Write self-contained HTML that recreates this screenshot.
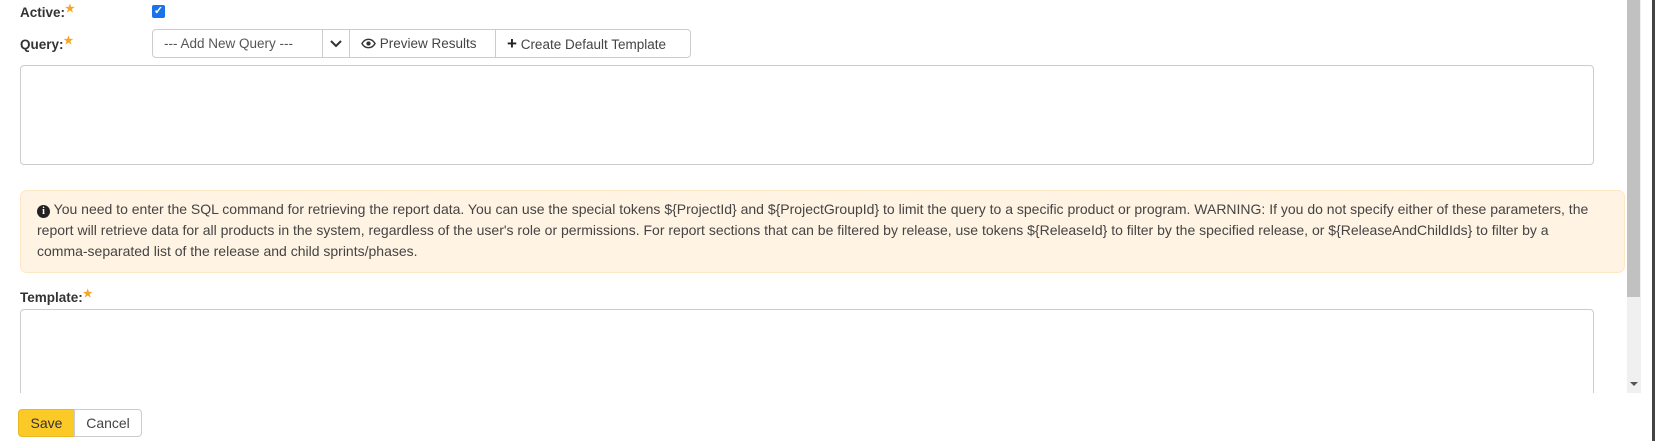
<!DOCTYPE html>
<html><head><style>
*{box-sizing:border-box}
body{margin:0;width:1655px;height:441px;background:#fff;font-family:"Liberation Sans",sans-serif;font-size:14px;color:#333;position:relative;overflow:hidden}
.abs{position:absolute}
.lbl{font-weight:bold;font-size:13.5px;color:#333}
.star{color:#f5a623;font-size:11px;vertical-align:top;position:relative;top:-3px}
.ta{border:1px solid #ccc;border-radius:4px;background:#fff}
.btn{position:absolute;top:29px;height:29px;border:1px solid #ccc;background:#fff;font-size:13.5px;color:#444;line-height:27px;padding:0 11px;white-space:nowrap}
</style></head><body>
<div class="abs lbl" style="left:20px;top:5px">Active:<span class="star">★</span></div>
<div class="abs" style="left:152px;top:5px;width:13px;height:13px;background:#1a73e8;border-radius:2px;color:#fff;font-size:11px;line-height:13px;text-align:center;font-weight:bold">✓</div>
<div class="abs lbl" style="left:20px;top:37px">Query:<span class="star">★</span></div>
<div class="btn" style="left:152px;width:171px;border-radius:4px 0 0 4px;color:#555">--- Add New Query ---</div>
<div class="btn" style="left:322px;width:28px;padding:0;text-align:center"><svg width="12" height="10" viewBox="0 0 12 10"><path d="M1 3l5 5 5-5" stroke="#333" stroke-width="2" fill="none"/></svg></div>
<div class="btn" style="left:349px;width:147px"><svg width="15" height="11" viewBox="0 0 16 11" style="vertical-align:-1px"><path d="M1 5.5C3 2 5.5 1 8 1s5 1 7 4.5C13 9 10.5 10 8 10S3 9 1 5.5z" fill="none" stroke="#333" stroke-width="1.5"/><circle cx="8" cy="5.5" r="2.3" fill="#333"/></svg> Preview Results</div>
<div class="btn" style="left:495px;width:196px;border-radius:0 4px 4px 0"><b style="font-size:17px;color:#222">+</b> Create Default Template</div>
<div class="abs ta" style="left:20px;top:65px;width:1574px;height:100px"></div>
<div class="abs" style="left:20px;top:190px;width:1605px;height:83px;background:#fff3e3;border:1px solid #fde7c4;border-radius:7px;padding:8px 28px 8px 16px;font-size:14px;line-height:21px;color:#444">
<span style="display:inline-block;width:13px;height:13px;border-radius:50%;background:#222;color:#fff;font-size:10px;line-height:13px;text-align:center;font-weight:bold;font-family:'Liberation Serif',serif">i</span> You need to enter the SQL command for retrieving the report data. You can use the special tokens ${ProjectId} and ${ProjectGroupId} to limit the query to a specific product or program. WARNING: If you do not specify either of these parameters, the report will retrieve data for all products in the system, regardless of the user's role or permissions. For report sections that can be filtered by release, use tokens ${ReleaseId} to filter by the specified release, or ${ReleaseAndChildIds} to filter by a comma-separated list of the release and child sprints/phases.</div>
<div class="abs lbl" style="left:20px;top:290px">Template:<span class="star">★</span></div>
<div class="abs ta" style="left:20px;top:309px;width:1574px;height:120px"></div>
<div class="abs" style="left:0;top:393px;width:1655px;height:48px;background:#fff"></div>
<div class="abs" style="left:1627px;top:0;width:14px;height:393px;background:#f0f0f0"></div>
<div class="abs" style="left:1627px;top:0;width:13px;height:297px;background:#c1c1c1"></div>
<div class="abs" style="left:1630px;top:382px;width:0;height:0;border-left:4px solid transparent;border-right:4px solid transparent;border-top:4px solid #555"></div>
<div class="abs" style="left:1652px;top:0;width:3px;height:441px;background:#444"></div>
<div class="abs" style="left:18px;top:409px;width:57px;height:28px;background:#fcca26;border:1px solid #e8b820;border-radius:4px 0 0 4px;text-align:center;line-height:26px;color:#333">Save</div>
<div class="abs" style="left:74px;top:409px;width:68px;height:28px;background:#fff;border:1px solid #ccc;border-radius:0 4px 4px 0;text-align:center;line-height:26px;color:#444">Cancel</div>
</body></html>
